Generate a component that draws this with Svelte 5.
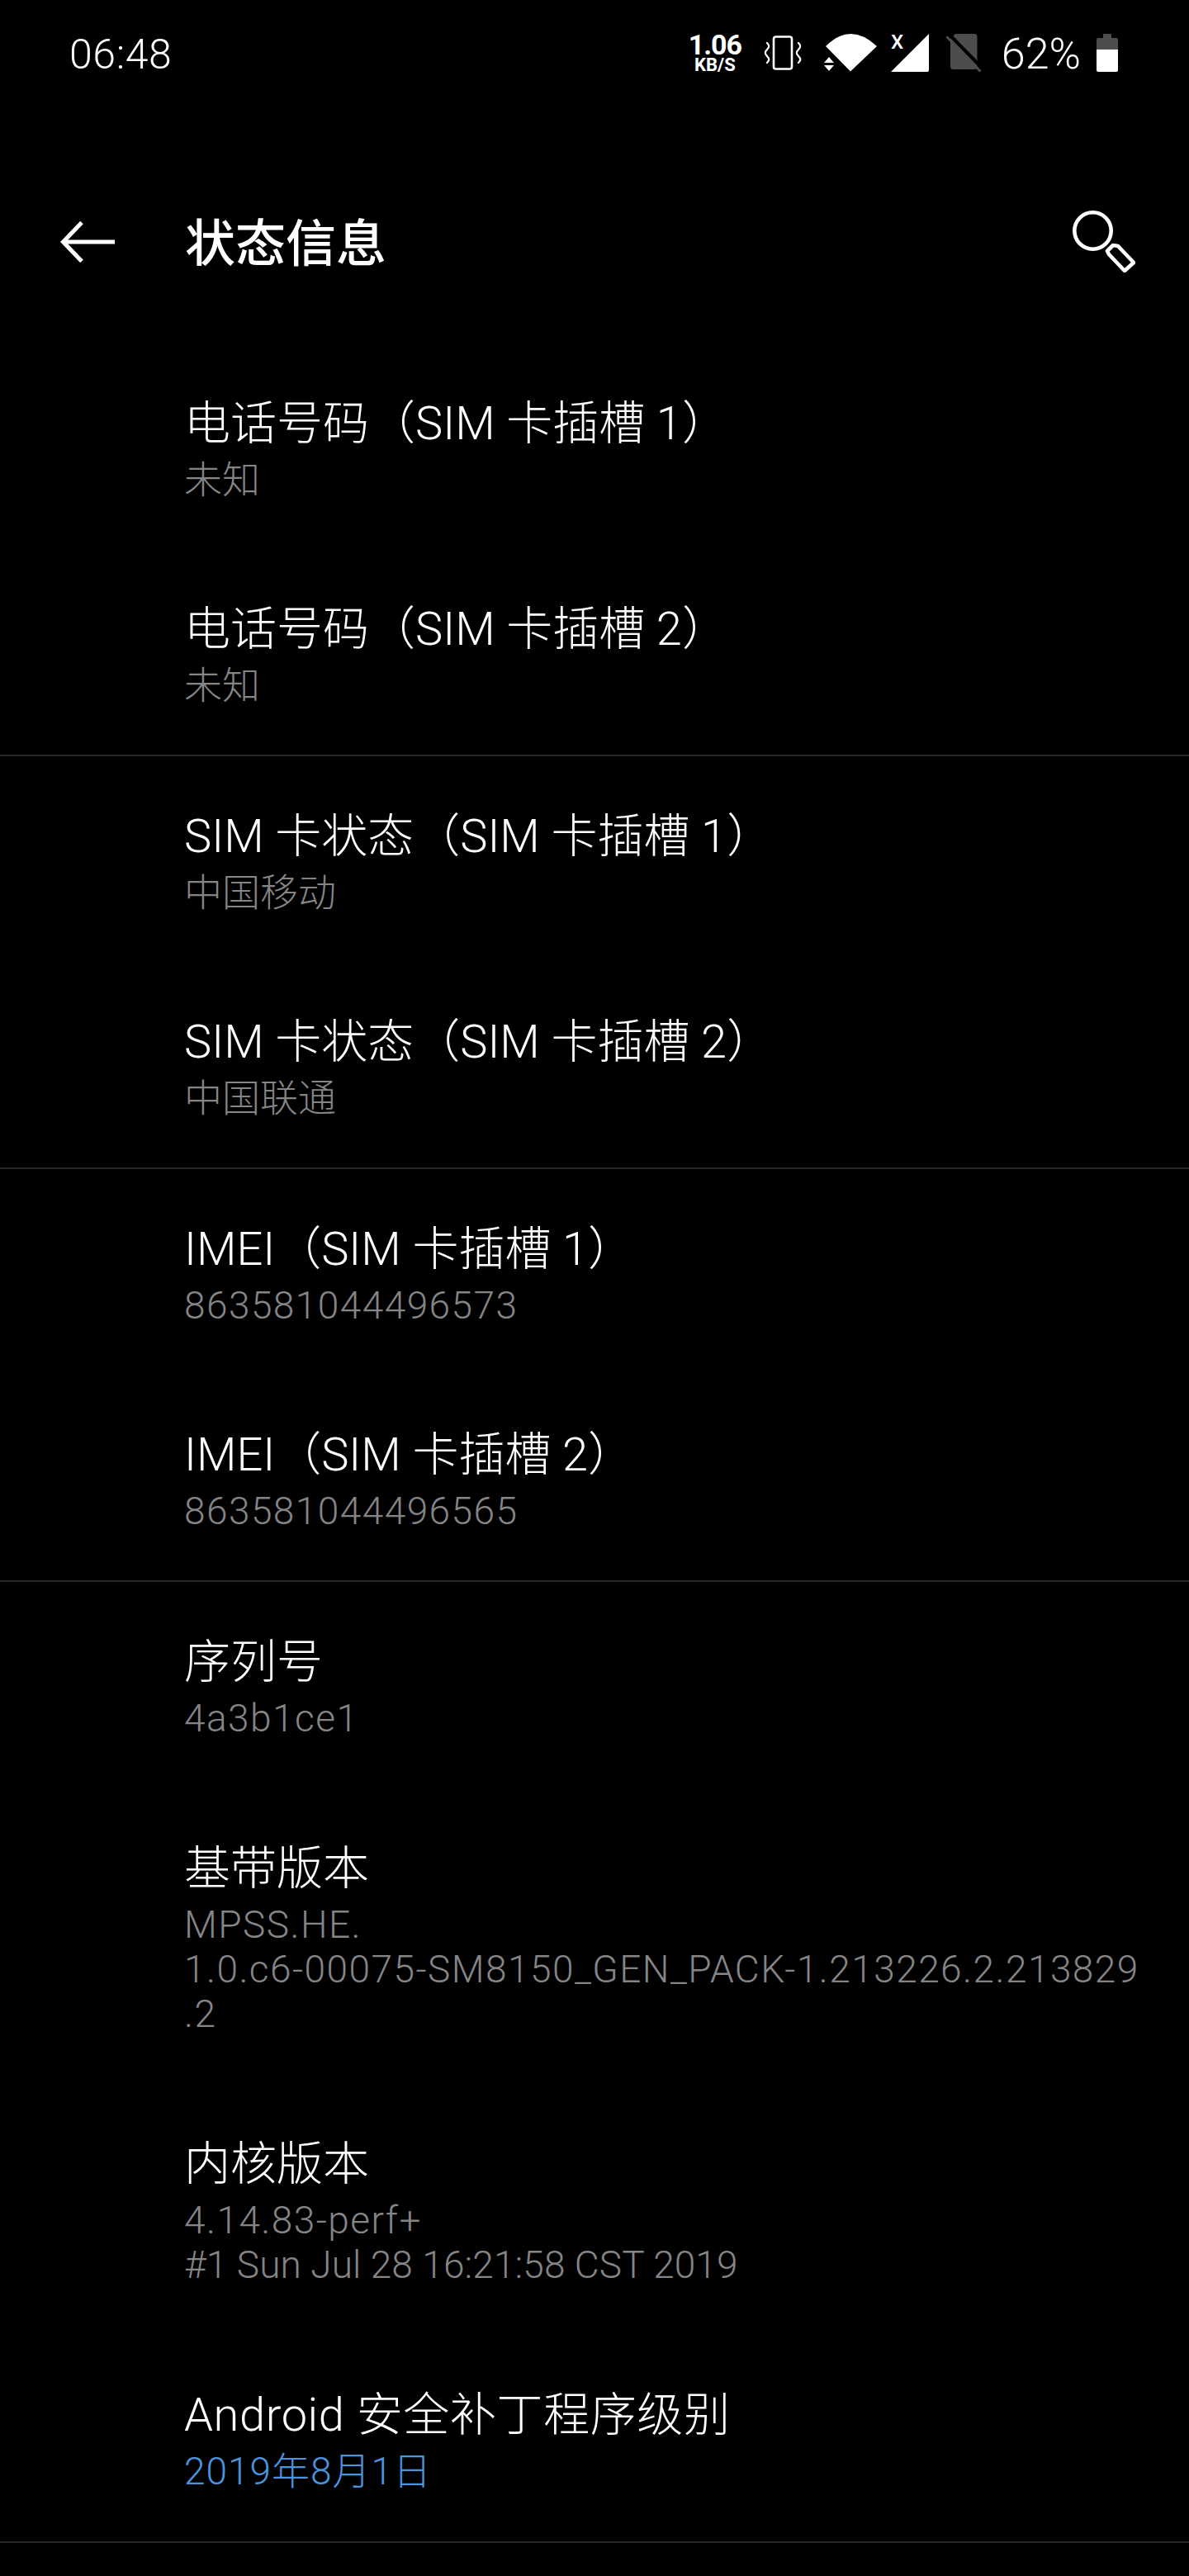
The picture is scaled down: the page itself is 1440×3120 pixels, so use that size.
<script>
  const sections = [
    [
      { title: "电话号码（SIM 卡插槽 1）", value: "未知" },
      { title: "电话号码（SIM 卡插槽 2）", value: "未知" }
    ],
    [
      { title: "SIM 卡状态（SIM 卡插槽 1）", value: "中国移动" },
      { title: "SIM 卡状态（SIM 卡插槽 2）", value: "中国联通" }
    ],
    [
      { title: "IMEI（SIM 卡插槽 1）", value: "863581044496573", wide: true },
      { title: "IMEI（SIM 卡插槽 2）", value: "863581044496565", wide: true }
    ],
    [
      { title: "序列号", value: "4a3b1ce1", wide: true },
      { title: "基带版本", value: "MPSS.HE.\n1.0.c6-00075-SM8150_GEN_PACK-1.213226.2.213829\n.2", wide: true },
      { title: "内核版本", value: "4.14.83-perf+\n#1 Sun Jul 28 16:21:58 CST 2019", wide: true },
      { title: "Android 安全补丁程序级别", value: "2019年8月1日", wide: true, link: true, spaced: true }
    ]
  ];
</script>

<div class="screen">
  <div class="status">
    <span class="clock">06:48</span>
    <div class="tray">
      <div class="speed">
        <span class="rate">1.06</span>
        <span class="unit">KB/S</span>
      </div>
      <svg class="vibrate" width="46" height="42" viewBox="0 0 46 42" fill="none" stroke="#fff">
        <rect x="12" y="1.5" width="22" height="39" rx="2.5" stroke-width="2.6" />
        <path d="M4 9 C7 12 7 14 4 17 C1 20 1 22 4 25 C7 28 7 30 4 33" stroke-width="2.4" stroke-linecap="round" />
        <path d="M42 9 C45 12 45 14 42 17 C39 20 39 22 42 25 C45 28 45 30 42 33" stroke-width="2.4" stroke-linecap="round" />
      </svg>
      <svg class="wifi" width="65" height="46" viewBox="0 0 65 46" fill="#fff">
        <path d="M32 45.5 L2 15 Q32 -15 64 15 Z" />
        <path d="M6 28 L12 35 L0 35 Z M0 38 L12 38 L6 45 Z" />
      </svg>
      <svg class="signal" width="46" height="46" viewBox="0 0 46 46" fill="#fff">
        <path d="M0 46 L46 0 L46 44 Q46 46 44 46 Z" />
        <text x="0" y="18" class="net">X</text>
      </svg>
      <svg class="sim" width="42" height="46" viewBox="0 0 42 46">
        <path d="M11 0 H34 Q37.5 0 37.5 3.5 V39 Q37.5 43 34 43 H8.5 Q5 43 5 39 V6 Z" fill="#4d4d4d" />
        <path d="M3 0 L43 41" stroke="#000" stroke-width="4" />
        <path d="M1 4 L41 45" stroke="#4d4d4d" stroke-width="3" stroke-linecap="round" />
      </svg>
      <span class="level">62%</span>
      <svg class="battery" width="26" height="46" viewBox="0 0 26 46">
        <path d="M8 0 H18 V5 H24 Q26 5 26 7 V19 H0 V7 Q0 5 2 5 H8 Z" fill="#4d4d4d" />
        <path d="M0 19 H26 V44 Q26 46 24 46 H2 Q0 46 0 44 Z" fill="#fff" />
      </svg>
    </div>
  </div>

  <div class="toolbar">
    <svg class="back" width="66" height="50" viewBox="0 0 66 50" fill="none" stroke="#fff" stroke-width="5">
      <path d="M66 25 H4" />
      <path d="M26 1.5 L3.5 25 L26 48.5" />
    </svg>
    <h1>状态信息</h1>
    <svg class="search" width="76" height="75" viewBox="0 0 76 75" fill="none" stroke="#fff" stroke-width="4.6" stroke-linejoin="round">
      <circle cx="24.5" cy="24.5" r="22.2" />
      <path d="M42 49 L49 42 L55 43 L74 63 L63 73 L44 53 Z" />
    </svg>
  </div>

  <div class="list">
    {#each sections as section}
      <div class="section">
        {#each section as item}
          <div class="item">
            <div class="title" class:spaced={item.spaced}>{item.title}</div>
            <div class="value" class:wide={item.wide} class:link={item.link}>
              {#each item.value.split("\n") as line}
                <div class:sentence={line.includes(" ")}>{line}</div>
              {/each}
            </div>
          </div>
        {/each}
      </div>
    {/each}
  </div>
</div>

<style>
  :global(body) {
    margin: 0;
    background: #000;
  }

  .screen {
    width: 1440px;
    height: 3120px;
    overflow: hidden;
    background: #000;
    color: #fff;
    font-family: Roboto, "Noto Sans CJK SC", sans-serif;
    font-weight: 300;
  }

  .status {
    height: 128px;
    display: flex;
    align-items: center;
    padding: 0 86px 0 84px;
  }

  .clock {
    font-size: 50px;
    font-weight: 300;
    letter-spacing: 0.6px;
    padding-top: 4px;
  }

  .tray {
    margin-left: auto;
    display: flex;
    align-items: center;
  }

  .speed {
    width: 60px;
    display: flex;
    flex-direction: column;
    align-items: center;
    font-weight: 700;
    margin-right: 29px;
  }

  .rate {
    font-size: 34px;
    line-height: 30px;
    letter-spacing: -1px;
  }

  .unit {
    font-size: 22px;
    line-height: 20px;
  }

  .wifi {
    margin-left: 27px;
  }

  .signal {
    margin-left: 16px;
    overflow: visible;
  }

  .sim {
    margin-left: 21px;
  }

  .level {
    margin-left: 25px;
    padding-top: 3px;
    font-size: 52px;
    font-weight: 300;
  }

  .battery {
    margin-left: 19px;
  }

  .net {
    font-size: 24px;
    font-weight: 500;
    font-family: Roboto, sans-serif;
  }

  .toolbar {
    height: 168px;
    margin-top: 81px;
    display: flex;
    align-items: center;
    padding: 0 65px 0 73px;
  }

  h1 {
    margin: 0 0 6px 85px;
    font-size: 61px;
    font-weight: 500;
  }

  .search {
    margin-left: auto;
    margin-bottom: 2px;
  }

  .list {
    padding-top: 39px;
  }

  .section {
    border-bottom: 2px solid #262626;
  }

  .item {
    padding: 56px 40px 57px 223px;
  }

  .section:last-child .item {
    padding-bottom: 58px;
  }

  .title {
    font-size: 56px;
    line-height: 82px;
  }

  .spaced {
    letter-spacing: 0.6px;
  }

  .value {
    font-size: 46px;
    line-height: 54px;
    color: #858585;
  }

  /* digits and latin run wider than the cjk values */
  .wide {
    letter-spacing: 1.45px;
  }

  .sentence {
    letter-spacing: 0.1px;
  }

  .link {
    color: #4a94dd;
    letter-spacing: 1px;
  }
</style>
